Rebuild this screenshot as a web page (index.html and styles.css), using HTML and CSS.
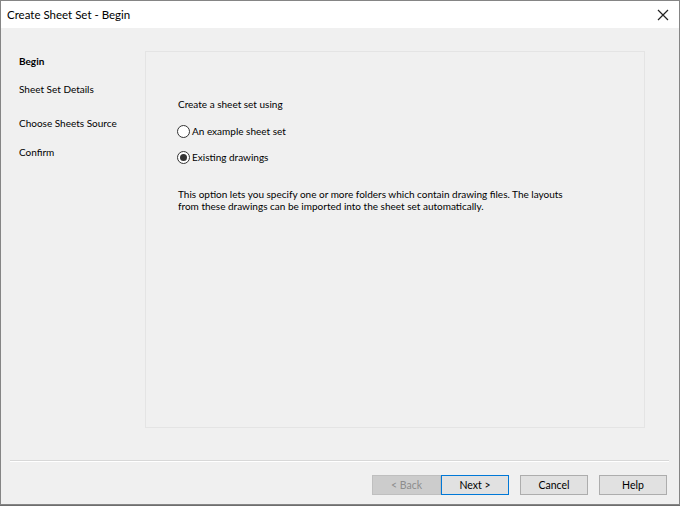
FILE: index.html
```html
<!DOCTYPE html>
<html>
<head>
<meta charset="utf-8">
<link rel="stylesheet" href="styles.css">
</head>
<body>
<div class="window">
  <div class="titlebar">
    <span class="title">Create Sheet Set - Begin</span>
    <span class="close"><svg width="12" height="12" viewBox="0 0 12 12"><path d="M1 1L11 11M11 1L1 11" stroke="#222" stroke-width="1.2" fill="none"/></svg></span>
  </div>
  <div class="body">
    <div class="main">
      <div class="sidebar">
        <div class="step s1 current">Begin</div>
        <div class="step s2">Sheet Set Details</div>
        <div class="step s3">Choose Sheets Source</div>
        <div class="step s4">Confirm</div>
      </div>
      <div class="panel">
        <div class="prompt">Create a sheet set using</div>
        <label class="radio r1"><span class="circle"></span>An example sheet set</label>
        <label class="radio r2"><span class="circle checked"></span>Existing drawings</label>
        <p class="desc">This option lets you specify one or more folders which contain drawing files. The layouts<br>from these drawings can be imported into the sheet set automatically.</p>
      </div>
    </div>
    <div class="footer">
      <div class="separator"></div>
      <div class="buttons">
        <div class="btn disabled">&lt; Back</div>
        <div class="btn default">Next &gt;</div>
        <div class="btn gap">Cancel</div>
        <div class="btn gap">Help</div>
      </div>
    </div>
  </div>
</div>
</body>
</html>
```
FILE: styles.css
```css
html, body {
  margin: 0;
  padding: 0;
  background: #6e6e6e;
}
body {
  font-family: "Lato", "Noto Sans", sans-serif;
  font-size: 10px;
  color: #000;
}
.window {
  width: 680px;
  height: 505px;
  box-sizing: border-box;
  border: 1px solid #858585;
  display: flex;
  flex-direction: column;
  background: #f0f0f0;
}
.titlebar {
  height: 27px;
  background: #fff;
  display: flex;
  align-items: center;
  justify-content: space-between;
  padding-left: 6px;
  padding-right: 10px;
  font-size: 11.5px;
}
.title {
  color: #000;
}
.close {
  display: flex;
  margin-top: 1px;
}
.body {
  flex: 1;
  display: flex;
  flex-direction: column;
}
.main {
  display: flex;
}
.sidebar {
  width: 126px;
  padding-left: 18px;
  padding-top: 26px;
}
.step {
  height: 14px;
  line-height: 14px;
  white-space: nowrap;
}
.step.current {
  font-weight: bold;
}
.s2 { margin-top: 14px; }
.s3 { margin-top: 20px; }
.s4 { margin-top: 15px; }
.panel {
  margin-top: 23px;
  width: 466px;
  height: 375px;
  border: 1px solid #e4e4e4;
  padding-left: 32px;
  box-sizing: content-box;
}
.prompt {
  margin-top: 45px;
  height: 14px;
  line-height: 14px;
}
.radio {
  display: flex;
  align-items: center;
  height: 14px;
  line-height: 14px;
  margin-left: -1px;
}
.r1 { margin-top: 13px; }
.r2 { margin-top: 12px; }
.circle {
  width: 11px;
  height: 11px;
  border: 1px solid #333;
  border-radius: 50%;
  background: #fff;
  margin-right: 2px;
  display: flex;
  align-items: center;
  justify-content: center;
}
.circle.checked::after {
  content: "";
  width: 7px;
  height: 7px;
  border-radius: 50%;
  background: #333;
}
.desc {
  margin: 24px 0 0 0;
  line-height: 12px;
}
.footer {
  flex: 1;
  display: flex;
  flex-direction: column;
}
.separator {
  margin: 32px 10px 0 9px;
  border-top: 1px solid #d8d8d8;
  border-bottom: 1px solid #ffffff;
  height: 0;
}
.buttons {
  margin-top: 13px;
  display: flex;
  justify-content: flex-end;
  padding-right: 12px;
}
.btn {
  width: 66px;
  height: 18px;
  line-height: 18px;
  text-align: center;
  background: #e1e1e1;
  border: 1px solid #adadad;
  font-size: 10.5px;
}
.btn.disabled {
  background: #cccccc;
  border-color: #bfbfbf;
  color: #8d8d8d;
  width: 67px;
}
.btn.default {
  border-color: #0078d7;
}
.btn.gap {
  margin-left: 11px;
}
```
